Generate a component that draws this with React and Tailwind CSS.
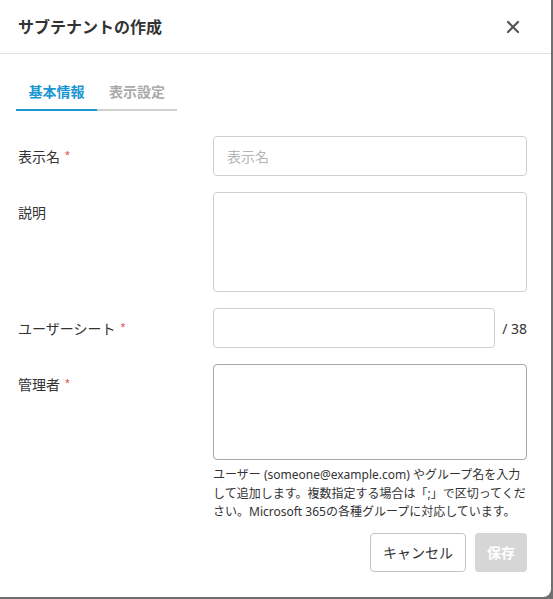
import { X } from "lucide-react";

const font = { fontFamily: '"Noto Sans", "Noto Sans CJK JP", sans-serif' };

function Required() {
    return <span className="ml-[5px] relative -top-[4px] text-[9px] text-[#e53935]">*</span>;
}

function Row({ label, required, children }) {
    return (
        <div className="flex items-start">
            <div className="w-[195px] shrink-0 pt-[10px] text-[14px] leading-[22px] text-[#333]">
                {label}
                {required && <Required />}
            </div>
            <div className="flex-1">{children}</div>
        </div>
    );
}

export default function App() {
    return (
        <div className="w-[553px] h-[599px] bg-[#6f6f6f]" style={font}>
            <div className="w-[551px] h-[597px] bg-white rounded-br-lg flex flex-col">
                {/* ヘッダー */}
                <div className="h-[54px] shrink-0 flex items-center justify-between pl-[18px] pr-[28px] border-b border-[#e2e2e2]">
                    <h2 className="text-[16px] font-bold text-[#333]">サブテナントの作成</h2>
                    <X className="w-[20px] h-[20px] text-[#555]" strokeWidth={2.6} />
                </div>

                {/* タブ */}
                <div className="flex pl-[16px] pt-[27px]">
                    <div className="w-[81px] text-center pb-[7px] border-b-2 border-[#1b96d3] text-[14px] font-bold text-[#1b96d3]">
                        基本情報
                    </div>
                    <div className="w-[80px] text-center pb-[7px] border-b-2 border-[#cfcfcf] text-[14px] font-bold text-[#aaa]">
                        表示設定
                    </div>
                </div>

                {/* フォーム */}
                <div className="flex flex-col gap-4 pl-[18px] pr-[24px] pt-[25px]">
                    <Row label="表示名" required>
                        <input
                            placeholder="表示名"
                            className="w-full h-[40px] px-[13px] border border-[#cfcfcf] rounded-[4px] text-[14px] placeholder:text-[#b5b5b5] outline-none"
                        />
                    </Row>
                    <Row label="説明">
                        <textarea className="block w-full h-[100px] border border-[#cfcfcf] rounded-[4px] resize-none outline-none" />
                    </Row>
                    <Row label="ユーザーシート" required>
                        <div className="flex items-center">
                            <input className="w-[282px] h-[40px] border border-[#cfcfcf] rounded-[4px] outline-none" />
                            <span className="ml-auto text-[14px] text-[#333]">/ 38</span>
                        </div>
                    </Row>
                    <Row label="管理者" required>
                        <textarea className="block w-full h-[96px] border border-[#a9a9a9] rounded-[4px] resize-none outline-none" />
                        <p className="mt-[6px] text-[12px] leading-[18.5px] text-[#333]">
                            ユーザー (someone@example.com) やグループ名を入力して追加します。複数指定する場合は「;」で区切ってください。Microsoft 365の各種グループに対応しています。
                        </p>
                    </Row>
                </div>

                {/* ボタン */}
                <div className="flex justify-end gap-[9px] pr-[24px] pt-[11px]">
                    <button className="h-[39px] px-[12px] border border-[#c4c4c4] rounded-[4px] text-[14px] text-[#333] bg-white">
                        キャンセル
                    </button>
                    <button className="h-[39px] w-[52px] rounded-[4px] text-[14px] font-bold text-white bg-[#d6d6d6]">
                        保存
                    </button>
                </div>
            </div>
        </div>
    );
}
